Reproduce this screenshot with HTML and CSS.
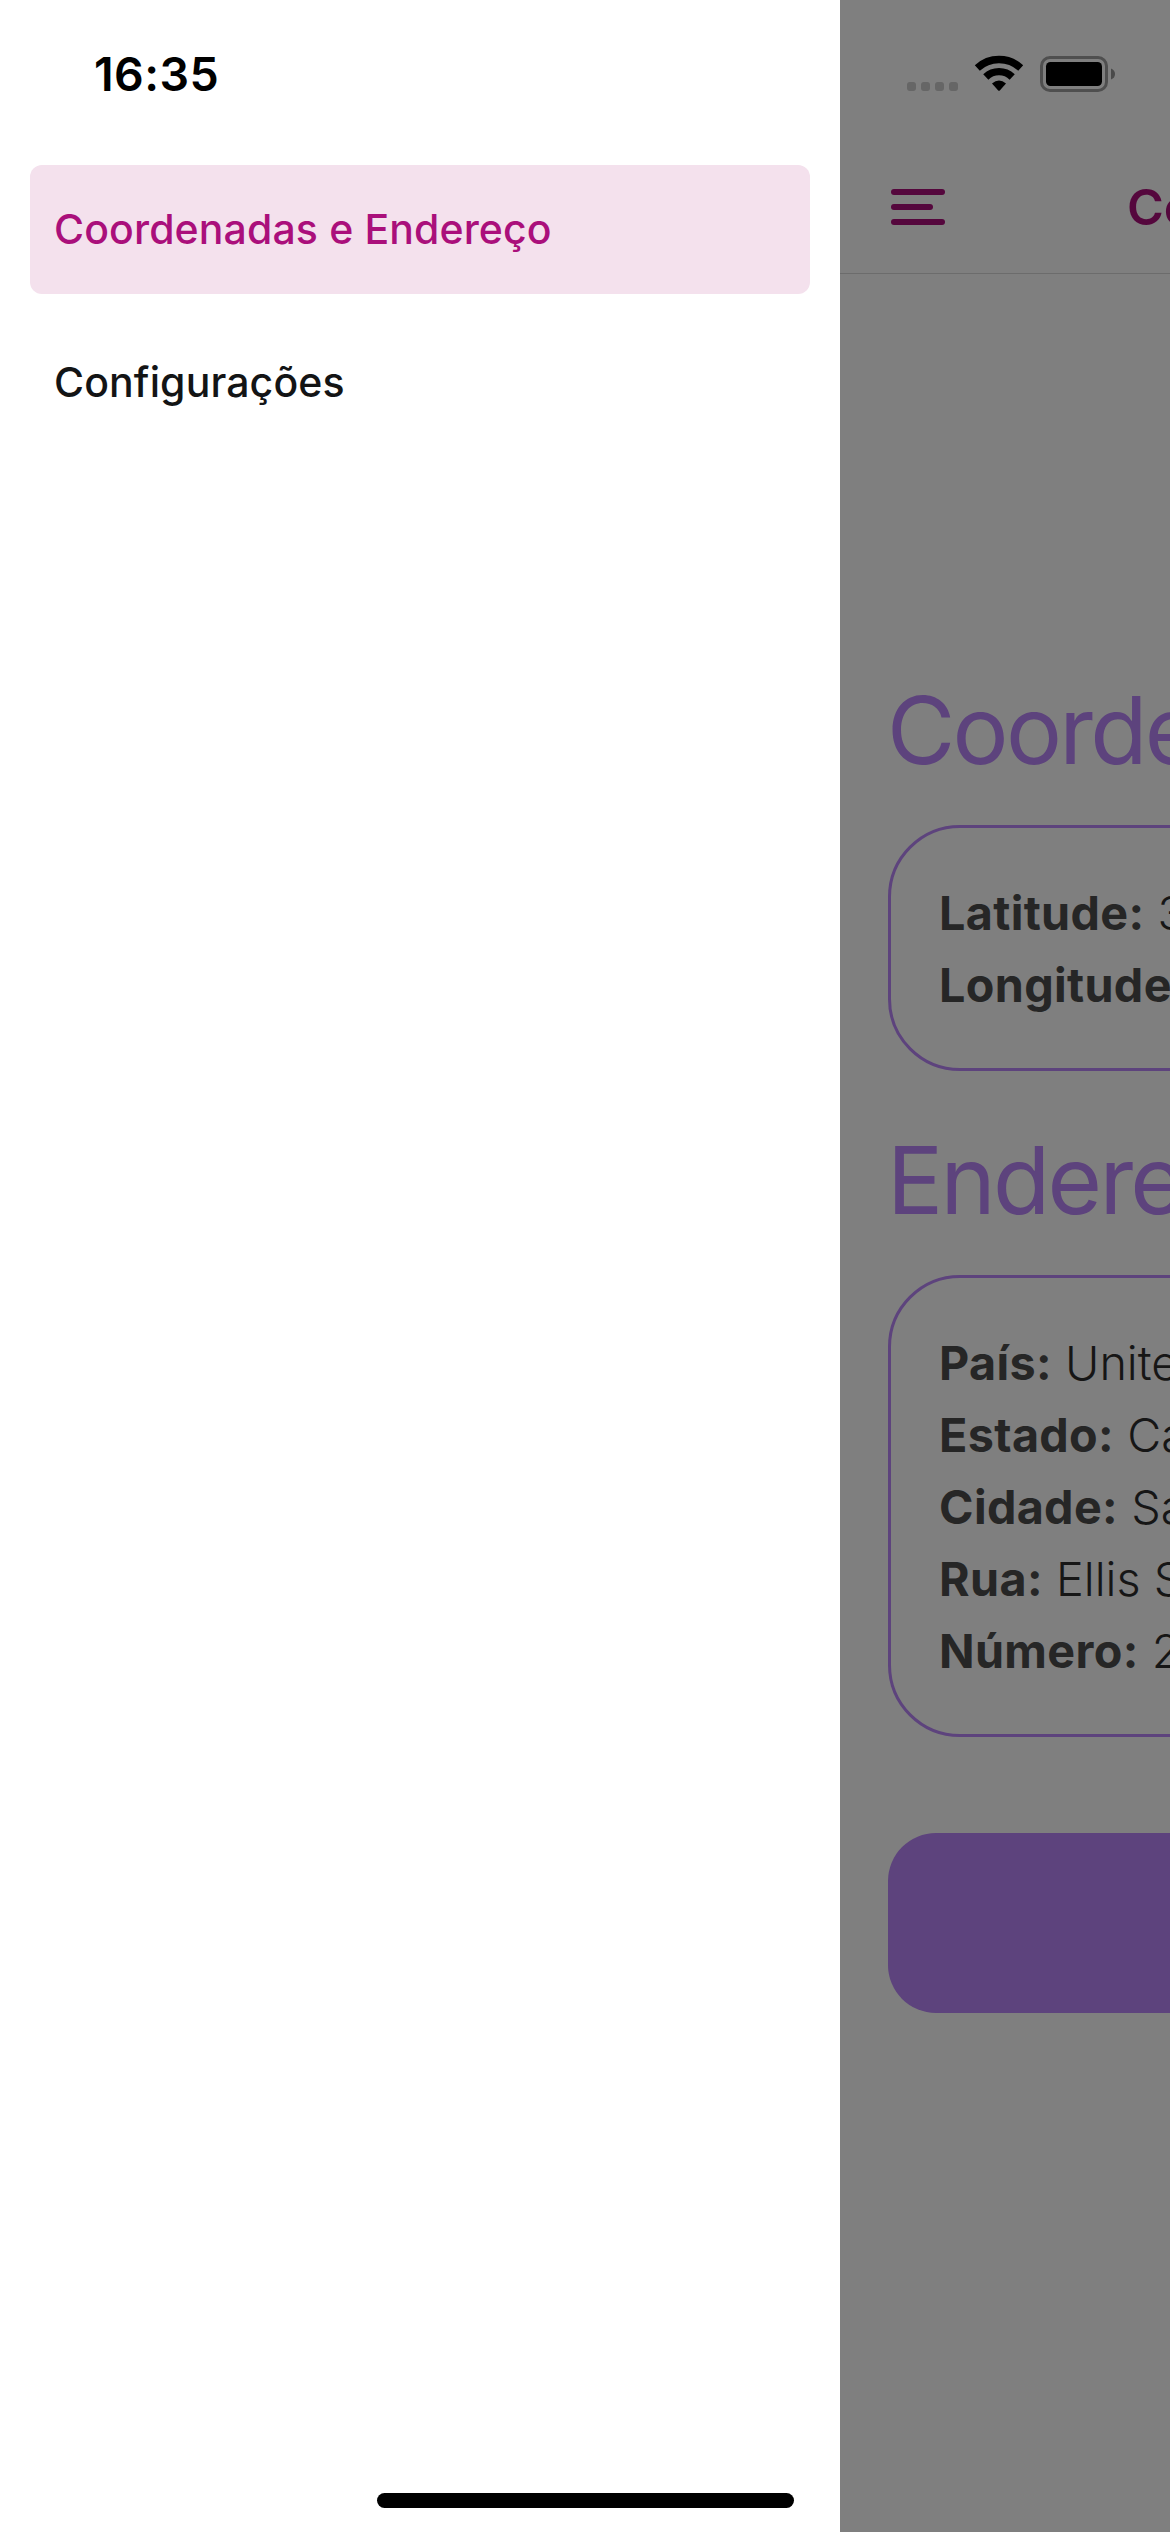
FILE: index.html
```html
<!DOCTYPE html>
<html lang="pt-BR">
<head>
<meta charset="utf-8">
<title>Coordenadas e Endereço</title>
<link rel="stylesheet" href="styles.css">
</head>
<body>
<div class="phone">
  <aside class="drawer">
    <div class="time">16:35</div>
    <nav class="menu">
      <a class="item active">Coordenadas e Endereço</a>
      <a class="item">Configurações</a>
    </nav>
  </aside>
  <main class="screen">
    <div class="status">
      <svg width="330" height="120" viewBox="0 0 330 120">
        <g fill="#666">
          <rect x="67" y="82" width="9" height="9" rx="3"/>
          <rect x="81" y="82" width="9" height="9" rx="3"/>
          <rect x="95" y="82" width="9" height="9" rx="3"/>
          <rect x="109" y="82" width="9" height="9" rx="3"/>
        </g>
        <g fill="none" stroke="#000" stroke-width="7.4">
          <path d="M137.3 68A32 32 0 0 1 180.7 68"/>
          <path d="M145.8 77A19 19 0 0 1 172.2 77"/>
        </g>
        <path d="M152 83.6Q159 77.2 166 83.6L160 90.2Q159 91.2 158 90.2Z"/>
        <rect x="201.5" y="57.5" width="65" height="33" rx="8.5" fill="none" stroke="#4f4f4f" stroke-width="3"/>
        <rect x="206" y="62" width="56" height="24" rx="4.5"/>
        <path d="M271 68.5Q275 70 275 74T271 79.5Z" fill="#4a4a4a"/>
      </svg>
    </div>
    <header class="header">
      <svg class="burger" width="54" height="36" viewBox="0 0 54 36">
        <rect width="54" height="6" rx="3"/>
        <rect y="15" width="42" height="6" rx="3"/>
        <rect y="30" width="54" height="6" rx="3"/>
      </svg>
      <div class="title">Co</div>
    </header>
    <section class="content">
      <h1>Coorde</h1>
      <div class="card">
        <p><b>Latitude:</b> 3</p>
        <p><b>Longitude</b></p>
      </div>
      <h1>Endere</h1>
      <div class="card">
        <p><b>País:</b> Unite</p>
        <p><b>Estado:</b> Ca</p>
        <p><b>Cidade:</b> Sa</p>
        <p><b>Rua:</b> Ellis S</p>
        <p><b>Número:</b> 2</p>
      </div>
      <div class="button"></div>
    </section>
  </main>
  <div class="home"></div>
</div>
</body>
</html>
```
FILE: styles.css
```css
* { box-sizing: border-box; margin: 0; padding: 0; }
body { font-family: Inter, "Liberation Sans", sans-serif; background: #fff; }
.phone {
  position: relative;
  display: grid;
  grid-template-columns: 840px 330px;
  width: 1170px;
  height: 2532px;
  overflow: hidden;
}
.drawer { background: #fff; }
.time {
  height: 165px;
  padding: 44px 0 0 94px;
  font-size: 46.5px;
  line-height: 60px;
  font-weight: 600;
  letter-spacing: 0.4px;
  color: #000;
}
.menu { display: flex; flex-direction: column; gap: 24px; padding: 0 30px; }
.item {
  height: 129px;
  padding-left: 24px;
  border-radius: 12px;
  font-size: 41px;
  line-height: 129px;
  font-weight: 500;
  letter-spacing: 0.12px;
  color: #131415;
}
.active { background: #f4e1ed; color: #aa0f7b; }
.screen { background: #7f7f7f; overflow: hidden; white-space: nowrap; }
.status { height: 141px; }
.status svg { display: block; }
.header {
  display: flex;
  height: 133px;
  padding: 48px 0 0 51px;
  border-bottom: 1px solid #6c6c6c;
}
.burger { flex: none; fill: #55073d; }
.title {
  margin: -12px 0 0 182px;
  font-size: 50px;
  line-height: 60px;
  font-weight: 600;
  color: #55073d;
}
.content { padding: 398px 0 0 48px; }
h1 {
  margin-bottom: 37px;
  margin-left: -1px;
  font-size: 93.5px;
  line-height: 116px;
  font-weight: 420;
  letter-spacing: -2.7px;
  color: #5d437d;
}
.card {
  width: 1074px;
  margin-bottom: 51px;
  padding: 49px 48px 47px;
  border: 3px solid #5d437d;
  border-radius: 72px;
  font-size: 46.7px;
  line-height: 72px;
  font-weight: 350;
  color: #161616;
}
.card b { font-weight: 700; letter-spacing: 0.35px; color: #262626; }
.button { width: 1074px; height: 180px; margin-top: 96px; border-radius: 48px; background: #5d437d; }
.home {
  position: absolute;
  left: 377px;
  top: 2493px;
  width: 417px;
  height: 15px;
  border-radius: 8px;
  background: #000;
}
```
